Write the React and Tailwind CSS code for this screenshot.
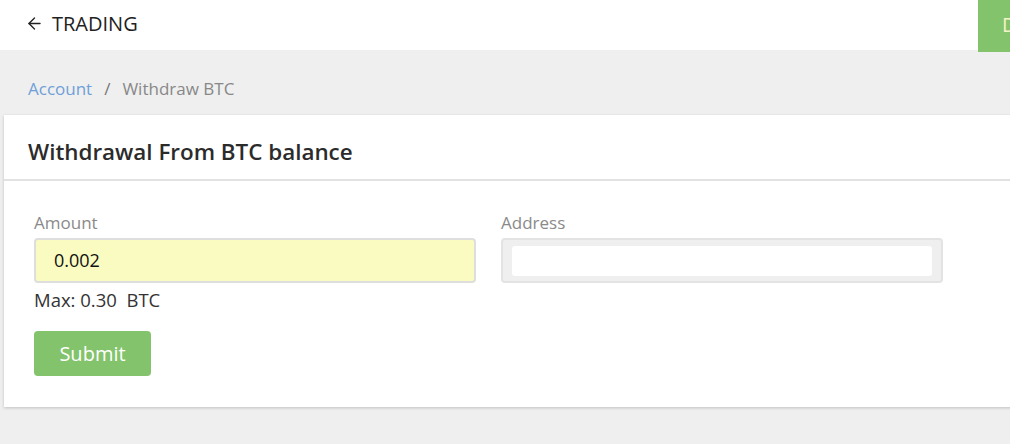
import React from "react";
import { ArrowLeft } from "lucide-react";

const font = { fontFamily: '"Open Sans", "Noto Sans", sans-serif' };

const App = () => {
    return (
        <div className="w-[1010px] h-[444px] overflow-hidden bg-[#efefef]" style={font}>
            {/* top bar */}
            <div className="h-[50px] bg-white flex items-center justify-between">
                <div className="flex items-center gap-[8px] pl-[25px] pb-[3px] text-[#222] text-[20px]">
                    <ArrowLeft size={19} strokeWidth={1.7} />
                    <span>TRADING</span>
                </div>
                <div className="self-start h-[52px] w-[32px] bg-[#83c36b] flex items-center pl-[24px] pb-[3px]">
                    <span className="text-[#f5f3c8] text-[20px]">D</span>
                </div>
            </div>

            {/* breadcrumb */}
            <div className="h-[65px] flex items-center pl-[28px] text-[17px] pt-[12px]">
                <span className="text-[#6f9fd8]">Account</span>
                <span className="text-[#777] px-[12px]">/</span>
                <span className="text-[#888]">Withdraw BTC</span>
            </div>

            {/* card */}
            <div className="ml-[4px] w-[1020px] h-[292px] bg-white shadow-[0_1px_3px_rgba(0,0,0,0.2)]">
                <div className="h-[66px] border-b-2 border-[#e2e2e2] flex items-center pl-[24px] pt-[10px]">
                    <h1 className="text-[22.4px] font-semibold text-[#2b2b2b]">Withdrawal From BTC balance</h1>
                </div>
                <div className="pl-[30px] pt-[31px]">
                    <div className="flex gap-[25px]">
                        <div className="w-[442px]">
                            <label className="block text-[17px] text-[#8a8a8a] leading-[22px] mb-[4px]">Amount</label>
                            <div className="h-[45px] rounded-[4px] border-2 border-[#dedede] bg-[#f9fbc0] flex items-center pl-[18px] text-[18px] text-[#111]">
                                0.002
                            </div>
                            <div className="text-[18.5px] text-[#333] mt-[3px] whitespace-pre">{"Max: 0.30  BTC"}</div>
                        </div>
                        <div className="w-[442px]">
                            <label className="block text-[17px] text-[#8a8a8a] leading-[22px] mb-[4px]">Address</label>
                            <div className="h-[45px] rounded-[4px] border-2 border-[#e3e3e3] bg-[#efefef] flex items-center px-[9px]">
                                <div className="h-[30px] w-full bg-white rounded-[3px]" />
                            </div>
                        </div>
                    </div>
                    <button className="mt-[17px] w-[117px] h-[45px] rounded-[4px] bg-[#83c36b] text-white text-[20px] pt-[2px]">
                        Submit
                    </button>
                </div>
            </div>
        </div>
    );
};

export default App;
